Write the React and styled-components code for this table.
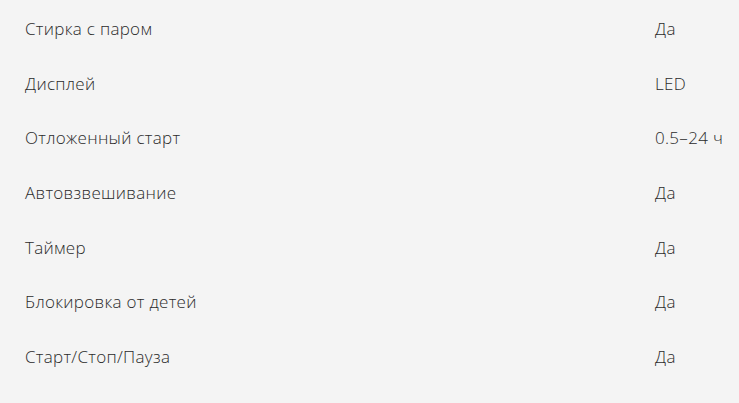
import React from "react";
import styled, { createGlobalStyle } from "styled-components";

const GlobalStyle = createGlobalStyle`
  html, body {
    margin: 0;
    padding: 0;
    background: #f4f4f4;
  }
  body {
    font-family: "Open Sans", Lato, sans-serif;
    color: #2b2b2b;
  }
`;

const specs = [
  ["Стирка с паром", "Да"],
  ["Дисплей", "LED"],
  ["Отложенный старт", "0.5–24 ч"],
  ["Автовзвешивание", "Да"],
  ["Таймер", "Да"],
  ["Блокировка от детей", "Да"],
  ["Старт/Стоп/Пауза", "Да"],
];

export default function App() {
  return (
    <>
      <GlobalStyle />
      <SpecList>
        {specs.map(([name, value]) => (
          <SpecRow key={name}>
            <SpecName>{name}</SpecName>
            <SpecValue>{value}</SpecValue>
          </SpecRow>
        ))}
      </SpecList>
    </>
  );
}

const SpecList = styled.dl`
  margin: 0;
  padding: 1.7px 0 0 25px;
  width: 739px;
  height: 403px;
  box-sizing: border-box;
  overflow: hidden;
`;

const SpecRow = styled.div`
  display: grid;
  grid-template-columns: 630px 1fr;
  align-items: center;
  height: 54.67px;
`;

const SpecName = styled.dt`
  font-size: 17px;
  font-weight: 300;
  letter-spacing: 0.3px;
  line-height: 20px;
  white-space: nowrap;
`;

const SpecValue = styled.dd`
  margin: 0;
  font-size: 17px;
  font-weight: 300;
  letter-spacing: 0.3px;
  line-height: 20px;
  white-space: nowrap;
`;
